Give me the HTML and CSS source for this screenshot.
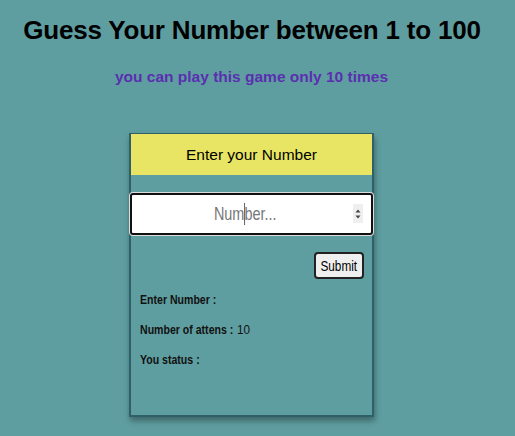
FILE: index.html
```html
<!DOCTYPE html>
<html>
<head>
<meta charset="utf-8">
<link rel="stylesheet" href="styles.css">
</head>
<body>
<h1 class="title">Guess Your Number between 1 to 100</h1>
<p class="subtitle">you can play this game only 10 times</p>
<div class="card">
  <div class="card-head">Enter your Number</div>
  <div class="input-box">
    <span class="placeholder">Num<span class="caret"></span>ber...</span>
    <span class="spin"><svg width="8" height="14" viewBox="0 0 8 14"><path d="M1.5 5.5 L4 2.5 L6.5 5.5 Z M1.5 8.5 L4 11.5 L6.5 8.5 Z" fill="#444"/></svg></span>
  </div>
  <div class="btn-row"><button class="submit"><span class="btn-text">Submit</span></button></div>
  <div class="info">
    <p class="line"><b class="lbl">Enter Number :</b></p>
    <p class="line"><b class="lbl">Number of attens :</b><span class="val">10</span></p>
    <p class="line"><b class="lbl">You status :</b></p>
  </div>
</div>
</body>
</html>
```
FILE: styles.css
```css
html, body { margin: 0; padding: 0; }
body {
  background: #5f9ea0;
  width: 515px;
  height: 436px;
  overflow: hidden;
  font-family: "Liberation Sans", Arial, sans-serif;
}
.title {
  margin: 13px 0 0 -11px;
  font-size: 26px;
  letter-spacing: -0.2px;
  font-weight: bold;
  text-align: center;
  white-space: nowrap;
  color: #000;
  line-height: 34px;
}
.subtitle {
  margin: 20px 0 0 0;
  padding-right: 12px;
  text-align: center;
  color: #5a2fb0;
  font-weight: bold;
  font-size: 15.5px;
  line-height: 20px;
}
.card {
  box-sizing: border-box;
  width: 245px;
  height: 284px;
  margin: 46px 0 0 129px;
  border: 2px solid #2e5f6a;
  border-top-width: 1px;
  box-shadow: 1px 4px 6px rgba(0,0,0,0.35);
  display: flex;
  flex-direction: column;
}
.card-head {
  background: #e7e563;
  height: 41px;
  display: flex;
  align-items: center;
  justify-content: center;
  font-size: 15.5px;
  color: #000;
}
.input-box {
  margin: 18px -1px 0 -1px;
  height: 42px;
  box-sizing: border-box;
  padding-right: 12px;
  background: #fff;
  border: 2px solid #111;
  border-radius: 3px;
  box-shadow: 0 0 0 1px #ddd;
  display: flex;
  align-items: center;
  justify-content: center;
  position: relative;
}
.placeholder {
  font-size: 19px;
  color: #777;
  display: inline-block;
  transform: scaleX(0.76);
}
.caret {
  display: inline-block;
  width: 1.3px;
  height: 22px;
  background: #333;
  vertical-align: -5px;
  margin: 0 -1.3px 0 0;
}
.spin {
  position: absolute;
  right: 8px;
  top: 9px;
  width: 10px;
  height: 19px;
  background: #efefef;
  display: flex;
  align-items: center;
  justify-content: center;
}
.btn-row {
  display: flex;
  justify-content: flex-end;
  padding: 17px 8px 0 0;
}
.submit {
  font-family: "Liberation Sans", Arial, sans-serif;
  font-size: 14px;
  background: #efefef;
  border: 2px solid #222;
  border-radius: 4px;
  height: 27px;
  width: 50px;
  padding: 0;
  color: #000;
  display: flex;
  align-items: center;
  justify-content: center;
}
.btn-text {
  display: inline-block;
  transform: scaleX(0.84);
}
.info {
  padding: 13px 0 0 9px;
}
.line {
  margin: 0 0 14px 0;
  height: 16px;
  line-height: 16px;
  color: #111;
  display: flex;
  align-items: baseline;
}
.lbl {
  font-weight: bold;
  font-size: 12px;
  display: inline-block;
  transform: scaleX(0.88);
  transform-origin: 0 50%;
  white-space: nowrap;
}
.line:nth-child(2) .lbl { margin-right: -13px; }
.val { font-size: 13px; font-weight: normal; margin-left: 4px; display: inline-block; transform: scaleX(0.9); transform-origin: 0 50%; }
```
